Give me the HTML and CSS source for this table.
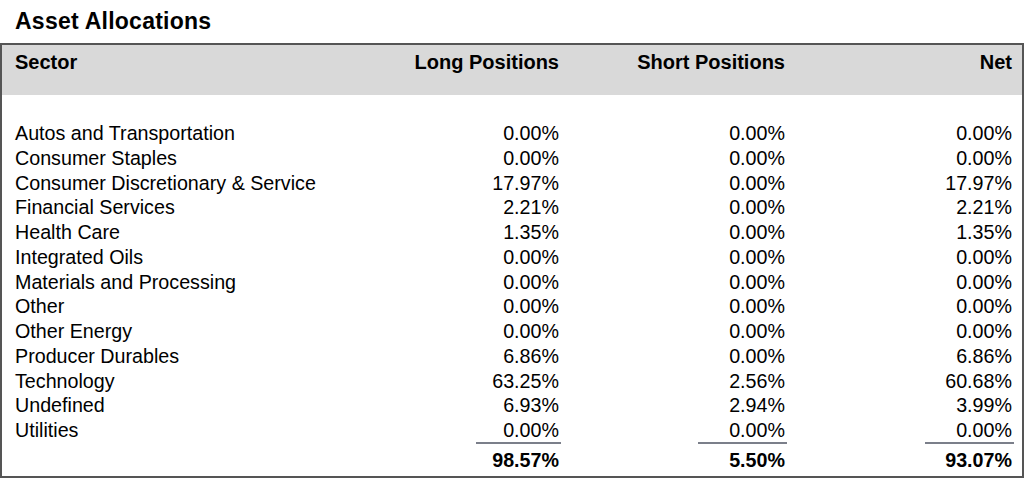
FILE: index.html
```html
<!DOCTYPE html>
<html lang="en">
<head>
<meta charset="utf-8">
<title>Asset Allocations</title>
<link rel="stylesheet" href="styles.css">
</head>
<body>
<h1 class="title">Asset Allocations</h1>
<div class="box">
  <div class="head row">
    <div class="c-sector">Sector</div>
    <div class="c-num">Long Positions</div>
    <div class="c-num">Short Positions</div>
    <div class="c-num">Net</div>
  </div>
  <div class="body">
    <div class="spacer"></div>
    <div class="row"><div class="c-sector">Autos and Transportation</div><div class="c-num">0.00%</div><div class="c-num">0.00%</div><div class="c-num">0.00%</div></div>
    <div class="row"><div class="c-sector">Consumer Staples</div><div class="c-num">0.00%</div><div class="c-num">0.00%</div><div class="c-num">0.00%</div></div>
    <div class="row"><div class="c-sector">Consumer Discretionary &amp; Service</div><div class="c-num">17.97%</div><div class="c-num">0.00%</div><div class="c-num">17.97%</div></div>
    <div class="row"><div class="c-sector">Financial Services</div><div class="c-num">2.21%</div><div class="c-num">0.00%</div><div class="c-num">2.21%</div></div>
    <div class="row"><div class="c-sector">Health Care</div><div class="c-num">1.35%</div><div class="c-num">0.00%</div><div class="c-num">1.35%</div></div>
    <div class="row"><div class="c-sector">Integrated Oils</div><div class="c-num">0.00%</div><div class="c-num">0.00%</div><div class="c-num">0.00%</div></div>
    <div class="row"><div class="c-sector">Materials and Processing</div><div class="c-num">0.00%</div><div class="c-num">0.00%</div><div class="c-num">0.00%</div></div>
    <div class="row"><div class="c-sector">Other</div><div class="c-num">0.00%</div><div class="c-num">0.00%</div><div class="c-num">0.00%</div></div>
    <div class="row"><div class="c-sector">Other Energy</div><div class="c-num">0.00%</div><div class="c-num">0.00%</div><div class="c-num">0.00%</div></div>
    <div class="row"><div class="c-sector">Producer Durables</div><div class="c-num">6.86%</div><div class="c-num">0.00%</div><div class="c-num">6.86%</div></div>
    <div class="row"><div class="c-sector">Technology</div><div class="c-num">63.25%</div><div class="c-num">2.56%</div><div class="c-num">60.68%</div></div>
    <div class="row"><div class="c-sector">Undefined</div><div class="c-num">6.93%</div><div class="c-num">2.94%</div><div class="c-num">3.99%</div></div>
    <div class="row"><div class="c-sector">Utilities</div><div class="c-num">0.00%</div><div class="c-num">0.00%</div><div class="c-num">0.00%</div></div>
    <div class="row total">
      <div class="c-sector"></div>
      <div class="c-num"><span class="sum sum-long">98.57%</span></div>
      <div class="c-num"><span class="sum sum-short">5.50%</span></div>
      <div class="c-num"><span class="sum sum-net">93.07%</span></div>
    </div>
  </div>
</div>
</body>
</html>
```

FILE: styles.css
```css
html, body {
  margin: 0;
  padding: 0;
  background: #ffffff;
}

body {
  font-family: "Liberation Sans", Arial, sans-serif;
  color: #000000;
  width: 1024px;
  height: 478px;
  overflow: hidden;
}

.title {
  margin: 0;
  padding-left: 15px;
  height: 43px;
  line-height: 43px;
  font-size: 23px;
  font-weight: bold;
  letter-spacing: 0.25px;
}

.box {
  border: 2px solid #555555;
  height: 435px;
  box-sizing: border-box;
}

.row {
  display: grid;
  grid-template-columns: 335px 209px 226px 227px;
  padding-left: 13px;
  padding-right: 10px;
}

.c-num {
  text-align: right;
}

.head {
  background: #d9d9d9;
  height: 50px;
  box-sizing: border-box;
  padding-top: 5px;
  font-size: 20px;
  font-weight: bold;
  line-height: 24px;
}

.body {
  font-size: 19.7px;
  line-height: 24.75px;
}

.spacer {
  height: 26px;
}

.total {
  font-weight: bold;
  margin-top: -1px;
}

.total .c-num {
  display: flex;
  justify-content: flex-end;
}

.sum {
  display: block;
  border-top: 2px solid #7b7f8a;
  padding-top: 4px;
  text-align: right;
  margin-right: -2px;
  padding-right: 2px;
}

.sum-long {
  width: 83px;
}

.sum-short {
  width: 87px;
}

.sum-net {
  width: 87px;
}
```
